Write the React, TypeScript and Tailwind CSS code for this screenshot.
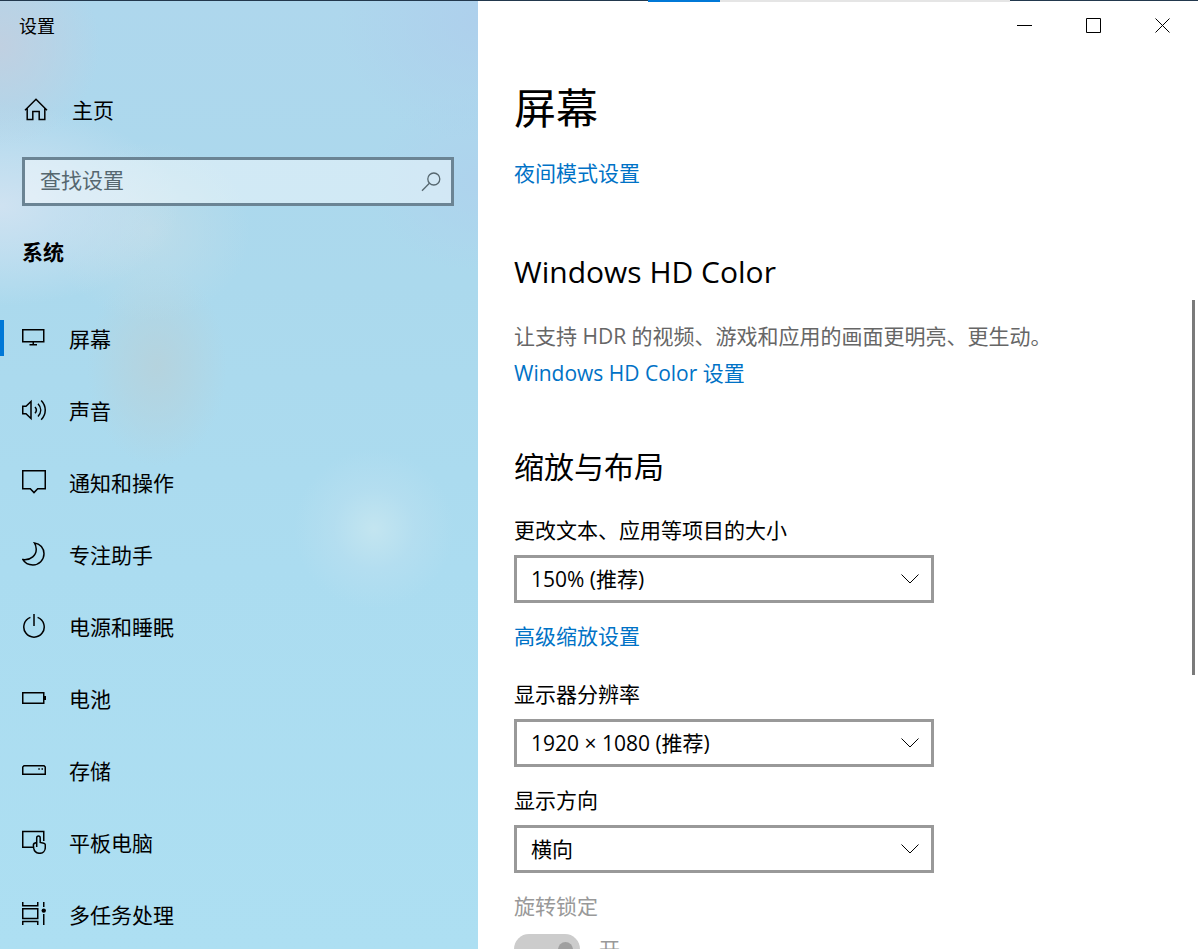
import { useState } from 'react';

interface NavItem {
  label: string;
  icon: React.ReactNode;
}

interface SelectFieldProps {
  id: string;
  label: string;
  options: string[];
}

function Icon({ children, size = 24 }: { children: React.ReactNode; size?: number }) {
  return (
    <svg
      width={size}
      height={size}
      viewBox={`0 0 ${size} ${size}`}
      fill="none"
      stroke="currentColor"
      strokeWidth={1.5}
      className="shrink-0"
      aria-hidden="true"
    >
      {children}
    </svg>
  );
}

const navItems: NavItem[] = [
  {
    label: '屏幕',
    icon: (
      <Icon>
        <path d="M0.75 3.75H21.75V15.75H0.75ZM11.25 15.75V18.75M7.5 18.75H15" />
      </Icon>
    ),
  },
  {
    label: '声音',
    icon: (
      <Icon>
        <path d="M0.75 8.25H4L9 3.5V20.5L4 15.75H0.75Z" />
        <path d="M13 9C14.8 11 14.8 13.2 13 15.2M16 5.8C19.6 9.6 19.6 14.6 16 18.4M19.2 2.4C24.6 8 24.6 16.2 19.2 21.8" />
      </Icon>
    ),
  },
  {
    label: '通知和操作',
    icon: (
      <Icon>
        <path d="M0.75 0.75H23.25V18.75H15.7L12 22.6L8.3 18.75H0.75Z" />
      </Icon>
    ),
  },
  {
    label: '专注助手',
    icon: (
      <Icon>
        <path d="M12.4 0.9C18.2 1.6 22 6.4 22 11.8C22 18 17 22.9 10.9 22.9C6.7 22.9 2.8 20.9 0.9 17.6C8.9 18.6 14.7 12.9 14.2 6.7C14 4.4 13.4 2.4 12.4 0.9Z" />
      </Icon>
    ),
  },
  {
    label: '电源和睡眠',
    icon: (
      <Icon>
        <path d="M12 0V12M8.4 3.4A10.2 10.2 0 1 0 15.6 3.4" />
      </Icon>
    ),
  },
  {
    label: '电池',
    icon: (
      <Icon>
        <path d="M0.75 6.75H21.75V17.25H0.75ZM23.25 10V14" />
      </Icon>
    ),
  },
  {
    label: '存储',
    icon: (
      <Icon>
        <path d="M2 7.75H22L23.25 9V16.25H0.75V9Z" />
        <path d="M16.3 11H17.8M19.5 11H21" />
      </Icon>
    ),
  },
  {
    label: '平板电脑',
    icon: (
      <Icon>
        <path d="M11 17.25H0.75V1.5H21.75V11" />
        <path d="M14.7 17V7.9C14.7 5.5 18.2 5.5 18.2 7.9V12.4L21.8 13.2C22.8 13.4 23.3 14 23.3 15V17.4C23.3 21 20.8 23.3 17.8 23.3C14.4 23.3 12.2 21.4 11.7 18.2L11.4 15.4C11.2 13.6 12.6 12.7 14.7 12.4" />
      </Icon>
    ),
  },
  {
    label: '多任务处理',
    icon: (
      <Icon>
        <path d="M0.75 0V3.75H15.75V0M0.75 6.75H15.75V16.5H0.75ZM0.75 23V19.5H15.75V23M21.75 0V5M21.75 12V23" />
        <circle cx="21.75" cy="8.6" r="2.2" fill="currentColor" stroke="none" />
      </Icon>
    ),
  },
];

function CaptionButton({ title, path }: { title: string; path: string }) {
  return (
    <button type="button" aria-label={title} className="flex h-12 w-[69px] items-center justify-center hover:bg-black/10">
      <svg width="16" height="16" viewBox="0 0 16 16" fill="none" stroke="currentColor" aria-hidden="true">
        <path d={path} />
      </svg>
    </button>
  );
}

function SelectField({ id, label, options }: SelectFieldProps) {
  return (
    <div>
      <label htmlFor={id} className="block">
        {label}
      </label>
      <div className="relative mt-[11px] max-w-[420px]">
        <select
          id={id}
          className="block h-12 w-full appearance-none border-3 border-[#999999] bg-white pr-12 pl-[14px] outline-none hover:border-[#666666]"
        >
          {options.map((option) => (
            <option key={option}>{option}</option>
          ))}
        </select>
        <svg
          width="18"
          height="10"
          viewBox="0 0 18 10"
          fill="none"
          stroke="currentColor"
          className="pointer-events-none absolute top-[19px] right-[15px]"
          aria-hidden="true"
        >
          <path d="M0.5 0.5L9 9L17.5 0.5" />
        </svg>
      </div>
    </div>
  );
}

export default function App() {
  const [active, setActive] = useState('屏幕');

  return (
    <div className="flex h-screen flex-col overflow-hidden bg-white font-['Open_Sans','Noto_Sans_CJK_SC',sans-serif] text-[21px] leading-7 text-black">
      {/* Edge of the window behind, with its progress bar */}
      <div className="relative z-10 flex h-px shrink-0 bg-[#22384d]">
        <div className="ml-[648px] h-0.5 w-[72px] bg-[#0078d7]" />
        <div className="h-0.5 w-[290px] bg-[#e5e5e5]" />
      </div>

      <div className="flex min-h-0 flex-1">
        <aside className="w-[478px] shrink-0 overflow-hidden bg-[radial-gradient(circle_at_0px_45px,#c0d0e1_0px,#c0d0e188_50px,#c0d0e100_100px),radial-gradient(ellipse_180px_100px_at_0px_205px,#cfe2f1_0%,#cfe2f188_50%,#cfe2f100_100%),radial-gradient(ellipse_100px_90px_at_150px_230px,#c0dde9cc_0%,#c0dde966_50%,#c0dde900_100%),radial-gradient(ellipse_70px_100px_at_157px_365px,#b5d3de_0%,#b5d3de88_50%,#b5d3de00_100%),radial-gradient(circle_at_374px_528px,#c3e5f0_0px,#b8dff0aa_40px,#b8dff000_80px),radial-gradient(ellipse_140px_120px_at_478px_20px,#aed0ec_0%,#aed0ec00_100%),radial-gradient(ellipse_110px_90px_at_478px_180px,#aed3ed_0%,#aed3ed00_100%),linear-gradient(to_bottom,#aed7ed_0%,#abd9ed_30%,#abdcf0_60%,#addff2_100%)]">
          <div className="flex h-[50px] items-center pl-[19px] text-lg">设置</div>

          <a href="#home" className="mt-[23px] flex h-[72px] items-center gap-6 pl-6 hover:bg-black/5">
            <Icon>
              <path d="M1 12.2L12 1.2L23 12.2M3.2 10.2V21.5H8.8V13.5H15.2V21.5H20.8V10.2" />
            </Icon>
            主页
          </a>

          <div className="mt-[11px] mr-6 ml-[22px] flex h-[49px] items-center border-3 border-[#6b8494] bg-white/45 pr-[10px] pl-[15px] text-[#56676f]">
            <input
              type="text"
              aria-label="查找设置"
              placeholder="查找设置"
              className="h-full min-w-0 flex-1 bg-transparent pb-1 outline-none placeholder:text-[#56676f]"
            />
            <svg width="20" height="20" viewBox="0 0 20 20" fill="none" stroke="currentColor" strokeWidth="1.3" aria-hidden="true">
              <circle cx="12.8" cy="7" r="6" />
              <path d="M8.4 11.3L1 18.8" />
            </svg>
          </div>

          <h2 className="mt-8 pl-[22px] font-bold">系统</h2>

          <nav className="mt-9">
            {navItems.map((item) => (
              <a
                key={item.label}
                href={`#${item.label}`}
                onClick={() => setActive(item.label)}
                className="flex h-[72px] items-center hover:bg-black/5"
              >
                <span className={`h-9 w-1 ${active === item.label ? 'bg-[#0078d7]' : 'bg-transparent'}`} />
                <span className="ml-[18px] flex items-center gap-[23px]">
                  {item.icon}
                  <span className="pt-0.5">{item.label}</span>
                </span>
              </a>
            ))}
          </nav>
        </aside>

        <main className="relative min-w-0 flex-1">
          <div className="flex justify-end pr-px">
            <CaptionButton title="最小化" path="M0 8.5H15" />
            <CaptionButton title="最大化" path="M0.5 1.5H14.5V15.5H0.5Z" />
            <CaptionButton title="关闭" path="M0.5 1.5L14.5 15.5M14.5 1.5L0.5 15.5" />
          </div>

          <div className="px-9 pt-[31px]">
            <h1 className="text-[42px] leading-[56px]">屏幕</h1>
            <a href="#night-light" className="mt-[23px] block text-[#0072c6]">
              夜间模式设置
            </a>

            <h2 className="mt-[65px] text-3xl leading-10">Windows HD Color</h2>
            <p className="mt-[30px] text-[#666666]">让支持 HDR 的视频、游戏和应用的画面更明亮、更生动。</p>
            <a href="#hd-color" className="mt-[9px] block text-[#0072c6]">
              Windows HD Color 设置
            </a>

            <h2 className="mt-[60px] mb-[29px] text-3xl leading-10">缩放与布局</h2>
            <SelectField id="scale" label="更改文本、应用等项目的大小" options={['150% (推荐)', '100%', '125%', '175%']} />
            <a href="#advanced-scaling" className="mt-[19px] mb-[30px] block text-[#0072c6]">
              高级缩放设置
            </a>
            <div className="flex flex-col gap-[19px]">
              <SelectField id="resolution" label="显示器分辨率" options={['1920 × 1080 (推荐)', '1680 × 1050', '1600 × 900']} />
              <SelectField id="orientation" label="显示方向" options={['横向', '纵向', '横向(翻转)', '纵向(翻转)']} />
              <div className="text-[#999999]">
                <label htmlFor="rotation-lock" className="block">
                  旋转锁定
                </label>
                <div className="mt-[14px] flex items-center gap-[19px]">
                  <input
                    id="rotation-lock"
                    type="checkbox"
                    role="switch"
                    defaultChecked
                    disabled
                    className="flex h-[30px] w-[66px] appearance-none items-center justify-end rounded-full bg-[#cccccc] pr-[7px] before:size-[15px] before:rounded-full before:bg-[#a0a0a0]"
                  />
                  <span>开</span>
                </div>
              </div>
            </div>
          </div>

          {/* Scroll thumb */}
          <div className="absolute top-[299px] right-[3px] h-[375px] w-[3px] bg-[#7a7a7a]" />
        </main>
      </div>
    </div>
  );
}
